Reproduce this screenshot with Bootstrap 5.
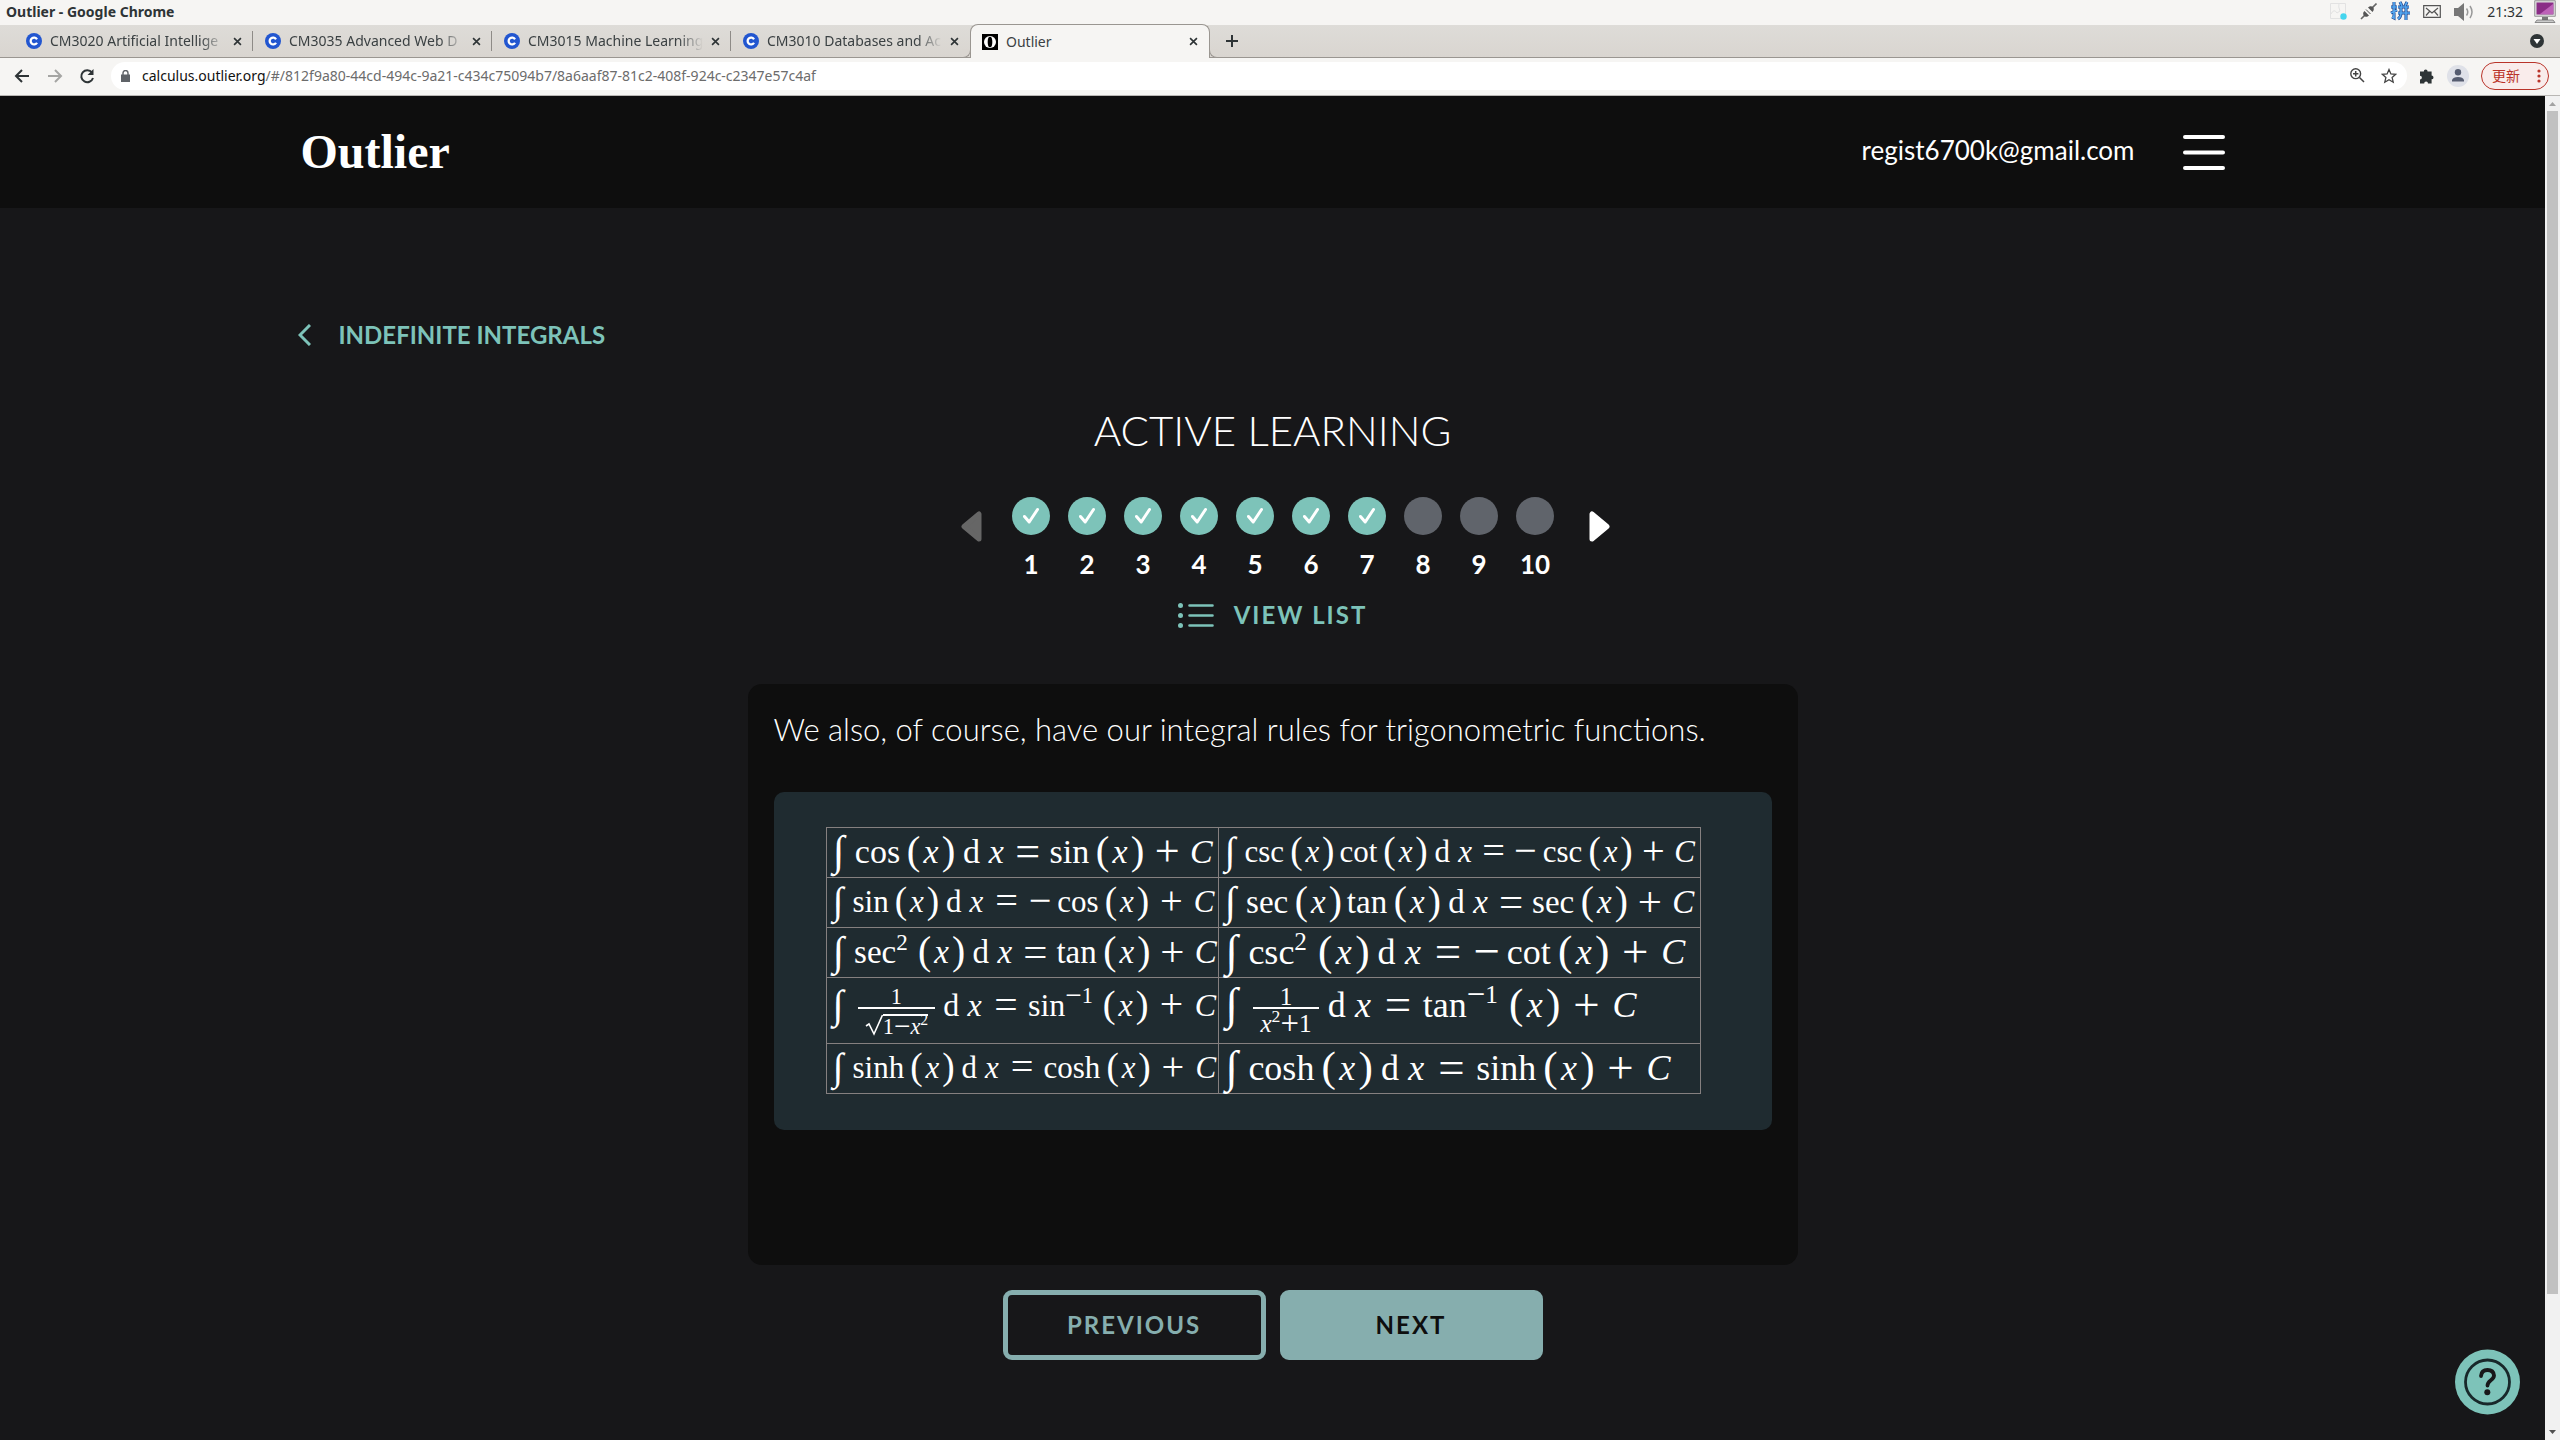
<!DOCTYPE html>
<html lang="en">
<head>
<meta charset="utf-8">
<meta name="viewport" content="width=device-width, initial-scale=1">
<title>Outlier</title>
<link href="https://cdn.jsdelivr.net/npm/bootstrap@5.3.0/dist/css/bootstrap.min.css" rel="stylesheet">
<style>
:root{--mint:#7dc3b9;--steel:#86aeae;--ink:#0e0e0e;--night:#171719}
body{font-family:Lato,sans-serif;background:var(--night);color:#fff}
button{background:none;border:0;padding:0}
.shell{font-family:"Noto Sans","Noto Sans CJK SC",sans-serif;font-size:14px;line-height:20px;color:#2e3436}
.titlebar{height:25px;background:#f6f5f3;padding:0 4px 2px 6px}
.titlebar strong{font-size:14px}
.tray{gap:13px}
.clock{gap:11px}
.tabstrip{height:33px;background:linear-gradient(#dedcd8,#d9d5d0);border-bottom:1px solid #9a9691;padding-left:14px}
.tab-item{width:239px;height:32px;padding:0 0 0 12px;gap:8px;color:#3b4143}
.tab-item .tab-label{overflow:hidden;white-space:nowrap;flex:1;font-size:14px}
.tab-idle{position:relative}
.tab-idle .tab-label{-webkit-mask-image:linear-gradient(90deg,#000 86%,transparent);mask-image:linear-gradient(90deg,#000 86%,transparent)}
.tab-split{width:1px;height:20px;background:#8e8b87;margin-left:2px}
.tab-blank{background:none}
.tab-on{position:relative;width:240px;height:34px;margin:-1px 0 -1px;background:#f6f5f3;border:1px solid #9a9691;border-bottom:0;border-radius:8px 8px 0 0;padding-left:11px}
.tab-on::before,.tab-on::after{content:"";position:absolute;bottom:0;width:9px;height:9px;border-bottom:1px solid #9a9691;background:#dad6d1}
.tab-on::before{left:-9px;border-right:1px solid #9a9691;border-bottom-right-radius:8px}
.tab-on::after{right:-9px;border-left:1px solid #9a9691;border-bottom-left-radius:8px}
.toolbar{height:38px;background:#f6f5f3;border-bottom:1px solid #b9b7b4;padding:0 11px 2px 13px}
.omnibox{height:28px;border-radius:14px;background:#fff;padding:0 10px}
.omnibox a{color:#6c6c6c;text-decoration:none;font-size:14px}
.omnibox a b{font-weight:400;color:#111}
.tool-end{gap:12px;margin-left:12px}
.update-pill{width:68px;height:28px;border:1px solid #b93329;border-radius:14px;background:#f9eceb;color:#b93329;padding:0 7px 0 10px}
.avatar{width:22px;height:22px;background:#dfe1e8}
.page-head{background:var(--ink);height:112px}
.wrap{width:100%;max-width:1944px;margin:0 auto}
.brand{font:bold 48px/56px "Liberation Serif",serif;color:#fff;text-decoration:none}
.account{gap:48px;margin-right:20px}
.mail{font-size:26px;line-height:36px;padding-bottom:4px}
.crumb{max-width:1950px;padding-top:111px}
.back-link{color:var(--mint);font-weight:700;font-size:24px;line-height:32px;text-decoration:none;gap:28px}
.lesson-title{font-weight:300;font-size:42px;line-height:48px;margin:54px 0 43px}
.steps{padding-left:26px}
.steps>button{padding-bottom:25px}
.steps ol{gap:18px;margin:0 35px 0 30px}
.step{width:38px;gap:12px;font-weight:700;font-size:26px;line-height:34px}
.dot{width:38px;height:38px;background:#60646b}
.dot.done{background:var(--mint)}
.spaced{font-weight:700;font-size:24px;line-height:32px;letter-spacing:2px}
.view-list{color:var(--mint);gap:20px;margin:18px 0 53px}
.lesson{width:1050px;max-width:100%;min-height:581px;background:var(--ink);border-radius:14px;padding:25px 26px}
.lesson p{font-weight:300;font-size:31px;line-height:40px;margin-bottom:43px}
.rules{background:#1f2b30;border-radius:10px;padding:35px 52px 36px}
.rule-table{border-collapse:collapse;table-layout:fixed;width:875px}
.rule-table .col-first{width:392px}
.rule-table td{border:1px solid #858080;padding:0 0 0 2px;height:50px;vertical-align:top;white-space:nowrap;line-height:48px;font-family:"Liberation Serif",serif}
.rule-table tr.tall td{height:66px;padding-top:3px}
.f31{font-size:31px}.f32{font-size:32px}.f33{font-size:33px}.f34{font-size:34px}.f36{font-size:36px}
.rule-table span{display:inline-block}
.m-int{width:.48em;margin-right:.14em;font-style:italic;text-align:center;font-size:1.25em;line-height:0;vertical-align:-.04em}
.m-fn{margin-right:.167em}
.m-x{width:.572em;font-style:italic;text-align:center}
.m-p{width:.382em;text-align:center;font-size:1.2em;line-height:0;vertical-align:-.03em}
.m-d{width:.556em;margin:0 .167em;text-align:center}
.m-op,.m-neg{width:.598em;margin:0 .192em;text-align:center;font-size:1.3em;line-height:0;vertical-align:-.06em}
.airy .m-op{margin:0 .231em}
.rule-table .m-neg{margin:0 .13em 0 0}
.m-c{width:.74em;font-style:italic;text-align:center}
.m-sup{font-size:.7em;line-height:0;vertical-align:.56em;margin-right:.4em}
.m-sm{font-size:1.3em;line-height:0;vertical-align:-.06em}
.rule-table .m-frac{display:inline-flex;flex-direction:column;align-items:center;vertical-align:12px;margin:0 .06em 0 .14em;line-height:20px}
.m-num,.m-den{font-size:.7em}
.m-den{border-top:2px solid #fff;padding:2px 7px 0;line-height:26px}
.m-den .m-sup{margin:0}
.m-root{border-top:2px solid #fff;line-height:22px;margin-top:3px}
.btn-row{gap:14px;margin-top:25px}
.help{position:absolute;right:25px;bottom:25px}
.btn-step{width:263px;height:70px;border:5px solid var(--steel);border-radius:9px;color:var(--steel)}
.btn-step.go{background:var(--steel);color:var(--ink)}
.scroll-rail{width:15px;background:#f1f1f1}
.scroll-thumb{width:11px;background:#c1c1c1;flex:0 0 88%}
</style>
</head>
<body>
<svg class="d-none">
<symbol id="cour" viewBox="0 0 16 16"><circle cx="8" cy="8" r="8" fill="#2256d0"/><path d="M11 6.3A3.4 3.4 0 1 0 11 9.7" fill="none" stroke="#fff" stroke-width="2.3"/></symbol>
<symbol id="cross" viewBox="0 0 10 10"><path d="M1.2 1.2l7.6 7.6M8.800 1.200l-7.600 7.600" stroke="#2e3436" stroke-width="1.800"/></symbol>
<symbol id="tick" viewBox="0 0 16 18"><path d="M1.500 9.500l4.700 5.500L14.500 2.500" fill="none" stroke="#fff" stroke-width="3" stroke-linecap="round" stroke-linejoin="round"/></symbol>
</svg>
<div class="d-flex flex-column vh-100 overflow-hidden">
<div class="shell">
  <div class="titlebar d-flex align-items-center justify-content-between">
    <strong>Outlier - Google Chrome</strong>
    <div class="tray d-flex align-items-center">
      <svg width="17" height="17" viewBox="0 0 17 17"><path d="M.5.500h15v15h-15zM1 11q3-6 6-1l3-2q-2-4-1-8" fill="none" stroke="#e2e2e2"/><circle cx="13.500" cy="13.500" r="3.200" fill="#45d5ee"/></svg>
      <svg width="17" height="17" viewBox="0 0 17 17"><path d="M1 16l4.500-4.500M12 5l4.500-4.500" stroke="#666" stroke-width="1.600"/><path d="M4.500 8l4.500 4.500c-2 2-4 1.300-5 .2s-1.500-3 .5-4.700zM8 4.500C10 2.500 12 3 13 4s1.400 3-.500 5z" fill="#555"/><path d="M6 6.500l4.500 4.500" stroke="#555"/></svg>
      <svg width="20" height="22" viewBox="0 0 20 22"><path d="M1 6h6M4 1v16l-2-1M1 12l6-3M10 1l2 4M17 1l-2 4M8 6h11M8 12h12M11 6v6q0 4-3 6M16 6v13" fill="none" stroke="#183c86" stroke-width="3"/><path d="M1 6h6M4 1v16l-2-1M1 12l6-3M10 1l2 4M17 1l-2 4M8 6h11M8 12h12M11 6v6q0 4-3 6M16 6v13" fill="none" stroke="#55a7f0" stroke-width="1.700"/></svg>
      <svg width="18" height="13" viewBox="0 0 18 13"><path d="M.7.700h16.600v11.600H.700zM3 3l6 5 6-5M3 10.500l3.500-4M15 10.500l-3.500-4" fill="none" stroke="#555" stroke-width="1.200"/></svg>
      <svg width="20" height="18" viewBox="0 0 20 18"><path d="M0 5h4l6-5v18l-6-5H0z" fill="#777"/><path d="M12.500 5.500q2.500 3.500 0 7M16 3q4 6 0 12" fill="none" stroke="#999" stroke-width="1.500"/></svg>
      <div class="clock d-flex align-items-center"><span>21:32</span>
      <svg width="22" height="23" viewBox="0 0 22 23"><path d="M.7.700h20.600v15.600H.700z" fill="#ddd" stroke="#999"/><path d="M2.500 2.500h17v12h-17z" fill="#8a2c86"/><path d="M6 14l13-10v10z" fill="#bd62b8"/><path d="M8 17h6v3H8z" fill="#777"/><path d="M3 20h16l2 2.500H1z" fill="#ccc" stroke="#666" stroke-width=".7"/></svg></div>
    </div>
  </div>
  <div class="tabstrip d-flex align-items-center">
    <div class="tab-item tab-idle d-flex align-items-center"><svg width="16" height="16"><use href="#cour"/></svg><span class="tab-label">CM3020 Artificial Intellige</span><button aria-label="Close tab" class="d-flex"><svg width="9" height="9"><use href="#cross"/></svg></button><i class="tab-split"></i></div>
    <div class="tab-item tab-idle d-flex align-items-center"><svg width="16" height="16"><use href="#cour"/></svg><span class="tab-label">CM3035 Advanced Web D</span><button aria-label="Close tab" class="d-flex"><svg width="9" height="9"><use href="#cross"/></svg></button><i class="tab-split"></i></div>
    <div class="tab-item tab-idle d-flex align-items-center"><svg width="16" height="16"><use href="#cour"/></svg><span class="tab-label">CM3015 Machine Learning</span><button aria-label="Close tab" class="d-flex"><svg width="9" height="9"><use href="#cross"/></svg></button><i class="tab-split"></i></div>
    <div class="tab-item tab-idle d-flex align-items-center"><svg width="16" height="16"><use href="#cour"/></svg><span class="tab-label">CM3010 Databases and Ac</span><button aria-label="Close tab" class="d-flex"><svg width="9" height="9"><use href="#cross"/></svg></button><i class="tab-split tab-blank"></i></div>
    <div class="tab-item tab-on d-flex align-items-center"><svg width="16" height="16" viewBox="0 0 16 16"><path d="M0 0h16v16H0z"/><ellipse cx="8" cy="8" rx="6" ry="6" fill="#fff"/><ellipse cx="8" cy="8" rx="2.300" ry="5.300"/></svg><span class="tab-label">Outlier</span><button aria-label="Close tab" class="d-flex"><svg width="9" height="9"><use href="#cross"/></svg></button><i class="tab-split tab-blank"></i></div>
    <button aria-label="New tab" class="d-flex ms-3"><svg width="12" height="12" viewBox="0 0 12 12"><path d="M6 0v12M0 6h12" stroke="#2e3436" stroke-width="2"/></svg></button>
    <button aria-label="Search tabs" class="d-flex ms-auto me-3"><svg width="14" height="14" viewBox="0 0 14 14"><circle cx="7" cy="7" r="7" fill="#2e3436"/><path d="M3.500 5h7L7 10z" fill="#fff"/></svg></button>
  </div>
  <div class="toolbar d-flex align-items-center">
    <button aria-label="Back" class="d-flex"><svg width="18" height="16" viewBox="0 0 18 16"><path d="M16 8H3M9 2L3 8l6 6" fill="none" stroke="#2e3436" stroke-width="2"/></svg></button>
    <button aria-label="Forward" class="d-flex ms-3"><svg width="16" height="16" viewBox="0 0 16 16"><path d="M1 8h13M8 2l6 6-6 6" fill="none" stroke="#a5a5a3" stroke-width="2"/></svg></button>
    <button aria-label="Reload" class="d-flex ms-3"><svg width="16" height="16" viewBox="0 0 16 16"><path d="M13 4.500A6 6 0 1 0 14 10" fill="none" stroke="#2e3436" stroke-width="2"/><path d="M14.500 1v6h-6z" fill="#2e3436"/></svg></button>
    <div class="omnibox d-flex align-items-center flex-grow-1 ms-3">
      <svg width="9" height="12" viewBox="0 0 9 12"><path d="M0 4.500h9V12H0z" fill="#5f6368"/><path d="M2 5V3a2.500 2.500 0 0 1 5 0v2" fill="none" stroke="#5f6368" stroke-width="1.400"/></svg>
      <a class="ms-2 ps-1" href="#"><b>calculus.outlier.org</b>/#/812f9a80-44cd-494c-9a21-c434c75094b7/8a6aaf87-81c2-408f-924c-c2347e57c4af</a>
      <svg class="ms-auto me-3" width="15" height="15" viewBox="0 0 15 15"><path d="M9.500 9.500L14 14M5.700 3v5.400M3 5.700h5.400" stroke="#444" stroke-width="1.500"/><circle cx="5.700" cy="5.700" r="4.900" fill="none" stroke="#444" stroke-width="1.400"/></svg>
      <svg width="16" height="16" viewBox="0 0 16 16"><path d="M8 1.500l1.900 4.400 4.800.4-3.600 3.200 1.100 4.700L8 11.700l-4.200 2.500 1.100-4.700L1.300 6.300l4.800-.4z" fill="none" stroke="#444" stroke-width="1.300"/></svg>
    </div>
    <div class="tool-end d-flex align-items-center">
      <svg width="16" height="16" viewBox="0 0 16 16"><path d="M1 3.500h3.800a1.900 1.900 0 1 1 3.800 0h4v4a1.900 1.900 0 1 1 0 3.800V15.500H9a1.900 1.900 0 1 0-3.800 0H1v-4a1.900 1.900 0 1 0 0-3.800z" fill="#2e3436"/></svg>
      <span class="avatar rounded-circle d-flex align-items-center justify-content-center"><svg width="12" height="13" viewBox="0 0 12 13"><circle cx="6" cy="3.200" r="3.200" fill="#565d70"/><path d="M0 12.500V11q1-3 6-3t6 3v1.500z" fill="#565d70"/></svg></span>
      <button class="update-pill d-flex align-items-center justify-content-between">更新<svg width="4" height="14" viewBox="0 0 4 14" fill="#b93329"><circle cx="2" cy="2" r="1.600"/><circle cx="2" cy="7" r="1.600"/><circle cx="2" cy="12" r="1.600"/></svg></button>
    </div>
  </div>
</div>

<div class="d-flex flex-grow-1 overflow-hidden">
<div class="flex-grow-1 position-relative">
  <header class="page-head d-flex align-items-center">
    <div class="wrap d-flex align-items-center justify-content-between">
      <a class="brand" href="#">Outlier</a>
      <div class="account d-flex align-items-center">
        <span class="mail">regist6700k@gmail.com</span>
        <button aria-label="Menu" class="d-flex"><svg width="42" height="36" viewBox="0 0 42 36"><path d="M2 3h38M2 18.500h38M2 34h38" stroke="#fff" stroke-width="4" stroke-linecap="round"/></svg></button>
      </div>
    </div>
  </header>
  <main>
    <div class="wrap crumb"><a class="back-link d-inline-flex align-items-center" href="#"><svg width="13" height="22" viewBox="0 0 13 22"><path d="M12 1L2 11l10 10" fill="none" stroke="#7dc3b9" stroke-width="3"/></svg>INDEFINITE INTEGRALS</a></div>
    <h1 class="lesson-title text-center">ACTIVE LEARNING</h1>
    <div class="steps d-flex justify-content-center align-items-center">
      <button aria-label="Earlier steps" class="d-flex"><svg width="21" height="31" viewBox="0 0 21 31"><path d="M18 3v25L3 15.500z" fill="#666" stroke="#666" stroke-width="5" stroke-linejoin="round"/></svg></button>
      <ol class="d-flex list-unstyled">
        <li class="step d-flex flex-column align-items-center"><span class="dot done rounded-circle d-flex align-items-center justify-content-center"><svg width="16" height="18"><use href="#tick"/></svg></span>1</li>
        <li class="step d-flex flex-column align-items-center"><span class="dot done rounded-circle d-flex align-items-center justify-content-center"><svg width="16" height="18"><use href="#tick"/></svg></span>2</li>
        <li class="step d-flex flex-column align-items-center"><span class="dot done rounded-circle d-flex align-items-center justify-content-center"><svg width="16" height="18"><use href="#tick"/></svg></span>3</li>
        <li class="step d-flex flex-column align-items-center"><span class="dot done rounded-circle d-flex align-items-center justify-content-center"><svg width="16" height="18"><use href="#tick"/></svg></span>4</li>
        <li class="step d-flex flex-column align-items-center"><span class="dot done rounded-circle d-flex align-items-center justify-content-center"><svg width="16" height="18"><use href="#tick"/></svg></span>5</li>
        <li class="step d-flex flex-column align-items-center"><span class="dot done rounded-circle d-flex align-items-center justify-content-center"><svg width="16" height="18"><use href="#tick"/></svg></span>6</li>
        <li class="step d-flex flex-column align-items-center"><span class="dot done rounded-circle d-flex align-items-center justify-content-center"><svg width="16" height="18"><use href="#tick"/></svg></span>7</li>
        <li class="step d-flex flex-column align-items-center"><span class="dot rounded-circle"></span>8</li>
        <li class="step d-flex flex-column align-items-center"><span class="dot rounded-circle"></span>9</li>
        <li class="step d-flex flex-column align-items-center"><span class="dot rounded-circle"></span>10</li>
      </ol>
      <button aria-label="Later steps" class="d-flex"><svg width="21" height="31" viewBox="0 0 21 31"><path d="M3 3v25l15-12.500z" fill="#fff" stroke="#fff" stroke-width="5" stroke-linejoin="round"/></svg></button>
    </div>
    <div class="d-flex justify-content-center"><button class="view-list spaced d-inline-flex align-items-center"><svg width="36" height="25" viewBox="0 0 36 25"><path d="M11.500 2.500h23M11.500 12.500h23M11.500 22.500h23" stroke="#7dc3b9" stroke-width="2.600" stroke-linecap="round"/><g fill="#7dc3b9"><circle cx="2.500" cy="2.500" r="2.500"/><circle cx="2.500" cy="12.500" r="2.500"/><circle cx="2.500" cy="22.500" r="2.500"/></g></svg>VIEW LIST</button></div>
    <section class="lesson mx-auto">
      <p>We also, of course, have our integral rules for trigonometric functions.</p>
      <div class="rules">
        <table class="rule-table">
          <colgroup><col class="col-first"><col></colgroup>
          <tr>
            <td class="f34"><span class="m-int">∫</span><span class="m-fn">cos</span><span class="m-p">(</span><span class="m-x">x</span><span class="m-p">)</span><span class="m-d">d</span><span class="m-x">x</span><span class="m-op">=</span><span class="m-fn">sin</span><span class="m-p">(</span><span class="m-x">x</span><span class="m-p">)</span><span class="m-op">+</span><span class="m-c">C</span></td>
            <td class="f31"><span class="m-int">∫</span><span class="m-fn">csc</span><span class="m-p">(</span><span class="m-x">x</span><span class="m-p me-1">)</span><span class="m-fn">cot</span><span class="m-p">(</span><span class="m-x">x</span><span class="m-p">)</span><span class="m-d">d</span><span class="m-x">x</span><span class="m-op">=</span><span class="m-neg">−</span><span class="m-fn">csc</span><span class="m-p">(</span><span class="m-x">x</span><span class="m-p">)</span><span class="m-op">+</span><span class="m-c">C</span></td>
          </tr>
          <tr>
            <td class="f31 airy"><span class="m-int">∫</span><span class="m-fn">sin</span><span class="m-p">(</span><span class="m-x">x</span><span class="m-p">)</span><span class="m-d">d</span><span class="m-x">x</span><span class="m-op">=</span><span class="m-neg">−</span><span class="m-fn">cos</span><span class="m-p">(</span><span class="m-x">x</span><span class="m-p">)</span><span class="m-op">+</span><span class="m-c">C</span></td>
            <td class="f33"><span class="m-int">∫</span><span class="m-fn">sec</span><span class="m-p">(</span><span class="m-x">x</span><span class="m-p me-1">)</span><span class="m-fn">tan</span><span class="m-p">(</span><span class="m-x">x</span><span class="m-p">)</span><span class="m-d">d</span><span class="m-x">x</span><span class="m-op">=</span><span class="m-fn">sec</span><span class="m-p">(</span><span class="m-x">x</span><span class="m-p">)</span><span class="m-op">+</span><span class="m-c">C</span></td>
          </tr>
          <tr>
            <td class="f33"><span class="m-int">∫</span><span>sec</span><span class="m-sup">2</span><span class="m-p">(</span><span class="m-x">x</span><span class="m-p">)</span><span class="m-d">d</span><span class="m-x">x</span><span class="m-op">=</span><span class="m-fn">tan</span><span class="m-p">(</span><span class="m-x">x</span><span class="m-p">)</span><span class="m-op">+</span><span class="m-c">C</span></td>
            <td class="f36 airy"><span class="m-int">∫</span><span>csc</span><span class="m-sup">2</span><span class="m-p">(</span><span class="m-x">x</span><span class="m-p">)</span><span class="m-d">d</span><span class="m-x">x</span><span class="m-op">=</span><span class="m-neg">−</span><span class="m-fn">cot</span><span class="m-p">(</span><span class="m-x">x</span><span class="m-p">)</span><span class="m-op">+</span><span class="m-c">C</span></td>
          </tr>
          <tr class="tall">
            <td class="f32 airy"><span class="m-int">∫</span><span class="m-frac"><span class="m-num">1</span><span class="m-den d-flex"><svg width="18" height="25" viewBox="0 0 18 25"><path d="M1 15l3-2 5 10L17.500 4" fill="none" stroke="#fff" stroke-width="1.600"/></svg><span class="m-root">1<span class="m-sm">−</span><i>x</i><span class="m-sup">2</span></span></span></span><span class="m-d">d</span><span class="m-x">x</span><span class="m-op">=</span><span>sin</span><span class="m-sup"><span class="m-sm">−</span>1</span><span class="m-p">(</span><span class="m-x">x</span><span class="m-p">)</span><span class="m-op">+</span><span class="m-c">C</span></td>
            <td class="f36 airy"><span class="m-int">∫</span><span class="m-frac"><span class="m-num">1</span><span class="m-den"><i>x</i><span class="m-sup">2</span><span class="m-sm">+</span>1</span></span><span class="m-d">d</span><span class="m-x">x</span><span class="m-op">=</span><span>tan</span><span class="m-sup"><span class="m-sm">−</span>1</span><span class="m-p">(</span><span class="m-x">x</span><span class="m-p">)</span><span class="m-op">+</span><span class="m-c">C</span></td>
          </tr>
          <tr>
            <td class="f31 airy"><span class="m-int">∫</span><span class="m-fn">sinh</span><span class="m-p">(</span><span class="m-x">x</span><span class="m-p">)</span><span class="m-d">d</span><span class="m-x">x</span><span class="m-op">=</span><span class="m-fn">cosh</span><span class="m-p">(</span><span class="m-x">x</span><span class="m-p">)</span><span class="m-op">+</span><span class="m-c">C</span></td>
            <td class="f36 airy"><span class="m-int">∫</span><span class="m-fn">cosh</span><span class="m-p">(</span><span class="m-x">x</span><span class="m-p">)</span><span class="m-d">d</span><span class="m-x">x</span><span class="m-op">=</span><span class="m-fn">sinh</span><span class="m-p">(</span><span class="m-x">x</span><span class="m-p">)</span><span class="m-op">+</span><span class="m-c">C</span></td>
          </tr>
        </table>
      </div>
    </section>
    <div class="btn-row d-flex justify-content-center">
      <button class="btn-step spaced">PREVIOUS</button>
      <button class="btn-step go spaced">NEXT</button>
    </div>
  </main>
  <button class="help d-flex" aria-label="Help"><svg width="65" height="66" viewBox="0 0 65 66"><circle cx="32.500" cy="33" r="32.500" fill="#7dc3b9"/><circle cx="32.500" cy="33" r="22" fill="none" stroke="#18282a" stroke-width="2.800"/><path d="M26 27q.5-6 6.500-6t6.500 5.500c0 5-6.500 4.500-6.500 10" fill="none" stroke="#18181a" stroke-width="3.800" stroke-linecap="round"/><circle cx="32.300" cy="43.300" r="3" fill="#18181a"/></svg></button>
</div>
<div class="scroll-rail d-flex flex-column align-items-center" aria-hidden="true">
  <svg width="15" height="15" viewBox="0 0 15 15"><path d="M4 10h7L7.500 6z" fill="#a3a3a3"/></svg>
  <div class="scroll-thumb"></div>
  <svg class="mt-auto" width="15" height="15" viewBox="0 0 15 15"><path d="M4 5h7L7.500 9z" fill="#505050"/></svg>
</div>
</div>
</div>
<script src="https://cdn.jsdelivr.net/npm/bootstrap@5.3.0/dist/js/bootstrap.bundle.min.js"></script>
</body>
</html>
